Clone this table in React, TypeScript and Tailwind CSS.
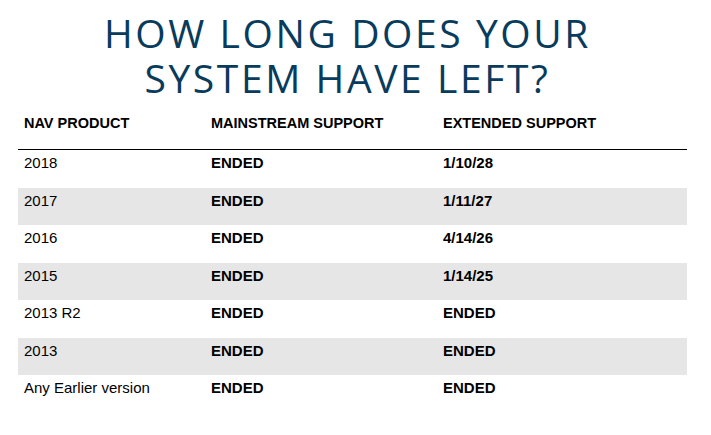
const rows = [
  { product: "2018", mainstream: "ENDED", extended: "1/10/28" },
  { product: "2017", mainstream: "ENDED", extended: "1/11/27" },
  { product: "2016", mainstream: "ENDED", extended: "4/14/26" },
  { product: "2015", mainstream: "ENDED", extended: "1/14/25" },
  { product: "2013 R2", mainstream: "ENDED", extended: "ENDED" },
  { product: "2013", mainstream: "ENDED", extended: "ENDED" },
  { product: "Any Earlier version", mainstream: "ENDED", extended: "ENDED" },
];

export default function App() {
  return (
    <div className="w-[711px] h-[435px] bg-white overflow-hidden font-['Liberation_Sans',Arial,sans-serif] text-black">
      <h1 className="pt-[10px] pr-[16px] text-center text-[39px] leading-[45px] tracking-[2.6px] font-normal text-[#083b5c] font-['Open_Sans',sans-serif]">
        <div>HOW LONG DOES YOUR</div>
        <div>SYSTEM HAVE LEFT?</div>
      </h1>

      <div className="ml-[18px] w-[669px]">
        <div className="flex pt-[13px] pb-[16px] border-b border-black text-[14.5px] leading-5 font-bold">
          <div className="w-[187px] pl-[6px]">NAV PRODUCT</div>
          <div className="w-[232px] pl-[6px]">MAINSTREAM SUPPORT</div>
          <div className="flex-1 pl-[6px]">EXTENDED SUPPORT</div>
        </div>
        {rows.map((r, i) => (
          <div
            key={r.product}
            className={`flex h-[37.5px] pt-[3px] text-[15px] leading-5 ${i % 2 === 1 ? "bg-[#e7e6e6]" : ""}`}
          >
            <div className="w-[187px] pl-[6px]">{r.product}</div>
            <div className="w-[232px] pl-[6px] font-bold">{r.mainstream}</div>
            <div className="flex-1 pl-[6px] font-bold">{r.extended}</div>
          </div>
        ))}
      </div>
    </div>
  );
}
